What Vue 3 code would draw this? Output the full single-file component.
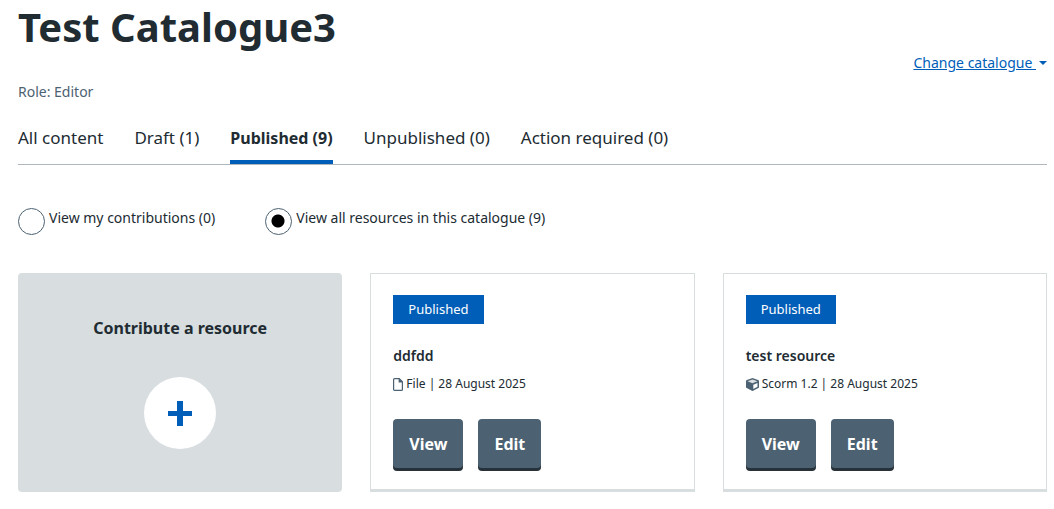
<script setup>
import { ref } from 'vue'

const tabs = [
  { id: 'all', label: 'All content' },
  { id: 'draft', label: 'Draft (1)' },
  { id: 'published', label: 'Published (9)' },
  { id: 'unpublished', label: 'Unpublished (0)' },
  { id: 'action', label: 'Action required (0)' },
]
const activeTab = ref('published')
const scope = ref('all')

const resources = [
  { title: 'ddfdd', type: 'File', icon: 'file', date: '28 August 2025' },
  { title: 'test resource', type: 'Scorm 1.2', icon: 'cube', date: '28 August 2025' },
]
</script>

<template>
  <main class="page">
    <h1>Test Catalogue3</h1>
    <div class="switcher">
      <a href="#" class="change"><span class="change-text">Change catalogue&nbsp;</span><svg class="caret" viewBox="0 0 8 4" aria-hidden="true"><path d="M0 0h8L4 4z" fill="#005eb8" /></svg></a>
    </div>
    <p class="role">Role: Editor</p>

    <nav class="tabs">
      <a
        v-for="tab in tabs"
        :key="tab.id"
        href="#"
        class="tab"
        :class="{ active: tab.id === activeTab }"
        @click.prevent="activeTab = tab.id"
      >{{ tab.label }}</a>
    </nav>

    <div class="filters">
      <label class="filter" for="scope-mine">
        <input id="scope-mine" v-model="scope" type="radio" name="scope" value="mine" />
        <span>View my contributions (0)</span>
      </label>
      <label class="filter" for="scope-all">
        <input id="scope-all" v-model="scope" type="radio" name="scope" value="all" />
        <span>View all resources in this catalogue (9)</span>
      </label>
    </div>

    <section class="cards">
      <div class="contribute">
        <h2>Contribute a resource</h2>
        <a href="#" class="add" aria-label="Contribute a resource">
          <svg width="26" height="26" viewBox="0 0 26 26" aria-hidden="true">
            <path d="M10 1h6v10h9v5h-9v10h-6V16H1v-5h9z" fill="#005eb8" />
          </svg>
        </a>
      </div>

      <article v-for="item in resources" :key="item.title" class="card">
        <span class="badge">Published</span>
        <h3>{{ item.title }}</h3>
        <p class="meta">
          <svg v-if="item.icon === 'file'" width="10" height="13" viewBox="0 0 10 13" aria-hidden="true">
            <path d="M1.500.6h4.700l3.200 3.200v7.700a.9.9 0 0 1-.9.900h-7a.9.9 0 0 1-.9-.9v-10a.9.9 0 0 1 .9-.9z" fill="none" stroke="#4c6272" stroke-width="1.200" />
            <path d="M5.600.6h.8L9.400 3.600v.9H5.600z" fill="#4c6272" />
          </svg>
          <svg v-else width="13" height="13" viewBox="0 0 13 13" aria-hidden="true">
            <path d="M5.900.2q.6-.2 1.200 0l5.100 1.900q.8.300.8 1.200v5.700q0 .8-.7 1.100l-5.200 2.700q-.6.300-1.200 0L.7 10.100Q0 9.800 0 9V3.300q0-.9.8-1.200z" fill="#4c6272" />
            <path d="M6.500 1.500l5 1.800-5 2-5-2z" fill="#fff" fill-opacity=".8" />
            <path d="M7.300 6.700l4.200-1.700v3.800l-4.200 2.200z" fill="#fff" />
          </svg>
          <span>{{ item.type }} | {{ item.date }}</span>
        </p>
        <div class="actions">
          <button type="button">View</button>
          <button type="button">Edit</button>
        </div>
      </article>
    </section>
  </main>
</template>

<style>
body {
  margin: 0;
  background: #fff;
}
</style>

<style scoped>
.page {
  padding: 0 7px 16px 18px;
  color: #212b32;
  font-family: "Noto Sans", "Open Sans", sans-serif;
  font-size: 14px;
  line-height: 20px;
}
h1,
h2,
h3,
p {
  margin: 0;
}
h1 {
  font-size: 40px;
  line-height: 53px;
  font-weight: 700;
}
.switcher {
  display: flex;
  justify-content: flex-end;
}
.change {
  display: flex;
  align-items: center;
  gap: 3px;
  color: #005eb8;
  text-decoration: none;
}
.change-text {
  text-decoration: underline;
}
.caret {
  width: 8px;
  height: 4px;
}
.role {
  margin-top: 9px;
  color: #4c6272;
}
.tabs {
  display: flex;
  gap: 31px;
  margin-top: 22px;
  border-bottom: 1px solid #aeb7bd;
}
.tab {
  padding: 1px 0 9px;
  border-bottom: 4px solid transparent;
  color: #212b32;
  font-size: 17px;
  line-height: 26px;
  text-decoration: none;
  white-space: nowrap;
}
.tab.active {
  border-bottom-color: #005eb8;
  font-size: 16px;
  font-weight: 700;
}
.filters {
  display: flex;
  gap: 50px;
  margin-top: 43px;
}
.filter {
  display: flex;
  gap: 4px;
}
.filter input {
  appearance: none;
  flex: none;
  width: 27px;
  height: 27px;
  margin: 0;
  border: 1px solid #4c6272;
  border-radius: 50%;
}
.filter input:checked {
  background: radial-gradient(circle at 12px 12px, #000 6px, transparent 7px);
}
.cards {
  display: grid;
  grid-template-columns: repeat(3, 1fr);
  gap: 28px;
  margin-top: 38px;
}
.contribute {
  display: flex;
  flex-direction: column;
  align-items: center;
  gap: 37px;
  padding-top: 43px;
  border-radius: 4px;
  background: #d8dde0;
}
h2 {
  font-size: 16px;
  line-height: 24px;
  font-weight: 700;
}
.add {
  display: flex;
  align-items: center;
  justify-content: center;
  width: 72px;
  height: 72px;
  border-radius: 50%;
  background: #fff;
}
.card {
  padding: 21px 22px 18px;
  border: 1px solid #d8dde0;
  border-bottom-width: 3px;
}
.badge {
  display: block;
  width: fit-content;
  padding: 4px 15px 5px;
  background: #005eb8;
  color: #fff;
  font-size: 13px;
}
h3 {
  margin-top: 22px;
  font-size: 14px;
  line-height: 20px;
  font-weight: 600;
}
.meta {
  display: flex;
  align-items: center;
  gap: 3px;
  margin-top: 8px;
  font-size: 12px;
}
.actions {
  display: flex;
  gap: 15px;
  margin-top: 25px;
}
button {
  height: 49px;
  margin-bottom: 3px;
  padding: 0 16px;
  border: 0;
  border-radius: 4px;
  background: #4c6272;
  box-shadow: 0 3px 0 #263139;
  color: #fff;
  font-family: inherit;
  font-size: 16px;
  font-weight: 700;
}
</style>
